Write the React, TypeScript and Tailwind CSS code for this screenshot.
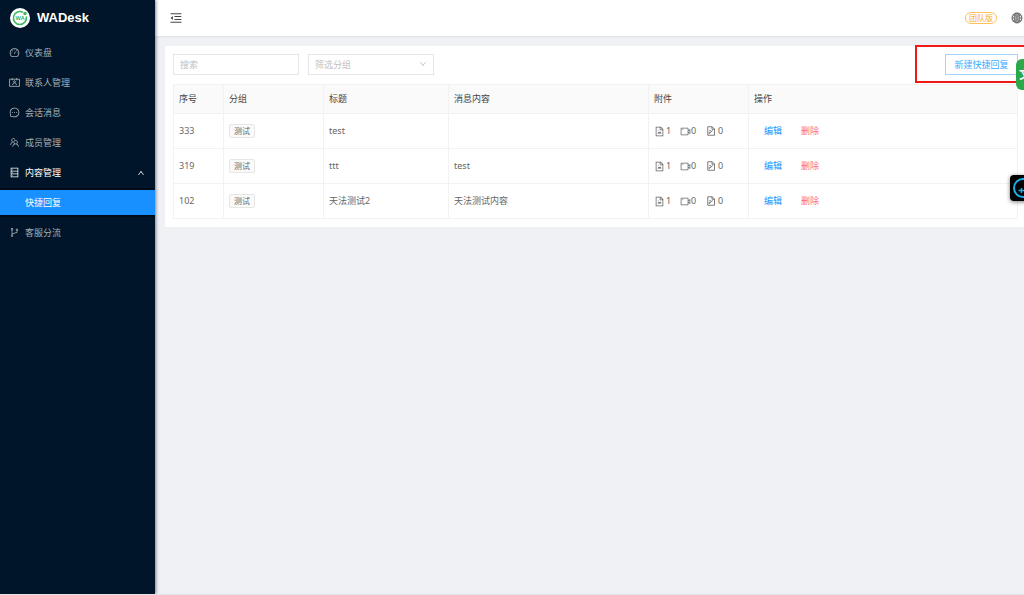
import React from 'react';
import {
  AiOutlineBranches,
  AiOutlineDashboard,
  AiOutlineDatabase,
  AiOutlineDown,
  AiOutlineFileImage,
  AiOutlineGlobal,
  AiOutlineMenuFold,
  AiOutlineMessage,
  AiOutlineTeam,
  AiOutlineUp,
  AiOutlineVideoCamera,
} from 'react-icons/ai';

const rows = [
  { id: 333, group: '测试', title: 'test', content: '' },
  { id: 319, group: '测试', title: 'ttt', content: 'test' },
  { id: 102, group: '测试', title: '天法测试2', content: '天法测试内容' },
];

const ContactsIcon = ({ className }: { className?: string }) => (
  <svg className={className} viewBox="0 0 20 20" fill="none" stroke="currentColor" strokeWidth="1.6">
    <path d="M1 4h18v13H1zM6 2v4M14 2v4" />
    <circle cx="10" cy="8.500" r="1.700" />
    <path d="M6.500 14.500c.3-2.500 1.700-4 3.500-4s3.200 1.500 3.500 4" />
  </svg>
);

const FileEditIcon = ({ className }: { className?: string }) => (
  <svg className={className} viewBox="0 0 20 20" fill="none" stroke="currentColor" strokeWidth="1.7">
    <path d="M3.500 1.500h9l4.500 4.500v12.500h-13.500zM12 1.500v5h5" />
    <path d="M6.500 15l7-6M6.500 9.500h4M6.500 12v3.500" />
  </svg>
);

const topMenu = [
  { label: '仪表盘', icon: AiOutlineDashboard },
  { label: '联系人管理', icon: ContactsIcon },
  { label: '会话消息', icon: AiOutlineMessage },
  { label: '成员管理', icon: AiOutlineTeam },
];

const Logo = () => (
  <svg className="h-5 w-5" viewBox="0 0 40 40">
    <circle cx="20" cy="20" r="20" fill="#fff" />
    <path d="M26 8.5A13 13 0 1 0 32.5 17" fill="none" stroke="#3fb55d" strokeWidth="3" />
    <circle cx="30" cy="11" r="3.5" fill="#3fb55d" />
    <text x="20" y="24" textAnchor="middle" fontSize="11" fontWeight="700" fill="#3fb55d">WA</text>
  </svg>
);

const Sidebar = () => (
  <aside className="relative z-10 flex w-[155px] shrink-0 flex-col bg-[#001529] text-[#a6adb4] shadow-[1px_0_3px_rgba(0,21,41,0.5)]">
    <div className="flex h-9 items-center gap-[7px] pl-2.5">
      <Logo />
      <h1 className="font-['Liberation_Sans',sans-serif] text-[13px] font-bold text-white">WADesk</h1>
    </div>
    <nav className="pt-1">
      {topMenu.map(({ label, icon: Icon }) => (
        <a key={label} href="#" className="mb-[5px] flex h-[25px] items-center gap-[5px] pl-[9px]">
          <Icon className="h-[11px] w-[11px]" />
          {label}
        </a>
      ))}
      <button className="flex h-[25px] w-full items-center gap-[5px] pr-2.5 pl-[9px] text-white">
        <AiOutlineDatabase className="h-[11px] w-[11px]" />
        内容管理
        <AiOutlineUp className="ml-auto h-2 w-2" />
      </button>
      <div className="my-[3px] bg-[#000c17] py-0.5">
        <a href="#" className="flex h-[25px] items-center bg-[#1890ff] pl-[25px] text-white">
          快捷回复
        </a>
      </div>
      <a href="#" className="flex h-[25px] items-center gap-[5px] pl-[9px]">
        <AiOutlineBranches className="h-[11px] w-[11px]" />
        客服分流
      </a>
    </nav>
  </aside>
);

const Header = () => (
  <header className="flex h-9 shrink-0 items-center justify-between bg-white pr-px pl-3.5 shadow-[0_1px_2px_rgba(0,21,41,0.08)]">
    <button aria-label="收起菜单">
      <AiOutlineMenuFold className="h-3.5 w-3.5 text-[#444]" />
    </button>
    <div className="flex items-center gap-3.5">
      <span className="flex h-3 items-center rounded-full border border-[#ffc25c] px-[3px] text-[8px] text-[#faad14]">
        团队版
      </span>
      <AiOutlineGlobal className="h-3 w-3 stroke-[30px] text-[#666]" />
    </div>
  </header>
);

const Attachments = () => (
  <div className="flex items-center">
    <span className="flex w-[26px] items-center gap-px">
      <AiOutlineFileImage className="h-[11px] w-[11px]" />1
    </span>
    <span className="flex w-[26px] items-center">
      <AiOutlineVideoCamera className="h-[11px] w-[11px]" />0
    </span>
    <span className="flex items-center gap-0.5">
      <FileEditIcon className="h-2.5 w-2.5" />0
    </span>
  </div>
);

const ReplyTable = () => {
  const cell = 'border border-[#f2f2f2] px-[5px] text-left';

  return (
    <table className="w-full table-fixed border-collapse">
      <colgroup>
        <col className="w-[50px]" />
        <col className="w-[100px]" />
        <col className="w-[125px]" />
        <col className="w-[200px]" />
        <col className="w-[100px]" />
        <col />
      </colgroup>
      <thead>
        <tr className="h-[29px] bg-[#fafafa] text-[#444]">
          {['序号', '分组', '标题', '消息内容', '附件', '操作'].map((name) => (
            <th key={name} className={`${cell} font-normal`}>{name}</th>
          ))}
        </tr>
      </thead>
      <tbody>
        {rows.map((row) => (
          <tr key={row.id} className="h-[35px]">
            <td className={cell}>{row.id}</td>
            <td className={cell}>
              <span className="inline-flex h-3.5 items-center rounded-xs border border-[#e6e6e6] bg-[#fafafa] px-1 align-middle text-[8px]">
                {row.group}
              </span>
            </td>
            <td className={cell}>{row.title}</td>
            <td className={cell}>{row.content}</td>
            <td className={cell}>
              <Attachments />
            </td>
            <td className={cell}>
              <div className="flex gap-[19px] pl-2.5">
                <button className="text-[#1890ff]">编辑</button>
                <button className="text-[#ff6b6e]">删除</button>
              </div>
            </td>
          </tr>
        ))}
      </tbody>
    </table>
  );
};

const App = () => {
  return (
    <div className="relative flex min-h-screen overflow-hidden border-b border-[#e4e4e6] bg-[#eff1f5] font-['Noto_Sans','Noto_Sans_CJK_SC',sans-serif] text-[9px] leading-3 text-[#666]">
      <Sidebar />
      <div className="flex min-w-0 flex-1 flex-col">
        <Header />
        <main className="mt-2.5 ml-2.5 bg-white pt-2 pr-1.5 pb-2 pl-2">
          <div className="mb-[9px] flex items-center">
            <input
              type="text"
              aria-label="搜索"
              placeholder="搜索"
              className="h-[21px] w-[126px] border border-[#e6e6e6] px-1.5 placeholder:text-[#bfbfbf]"
            />
            <div className="relative ml-[9px]">
              <select
                aria-label="筛选分组"
                className="block h-[21px] w-[126px] appearance-none border border-[#e6e6e6] bg-white px-1.5 text-[#bfbfbf]"
              >
                <option>筛选分组</option>
              </select>
              <AiOutlineDown className="pointer-events-none absolute top-1.5 right-[7px] h-2 w-2 text-[#bfbfbf]" />
            </div>
            <button className="ml-auto h-[21px] w-[73px] border border-[#a3d3ff] text-[#40a9ff]">
              新建快捷回复
            </button>
          </div>
          <ReplyTable />
        </main>
      </div>

      {/* highlight frame around the create button */}
      <div className="pointer-events-none absolute top-[45px] -right-1 z-20 h-[38px] w-[113px] border-2 border-[#f01818]" />
      {/* floating widgets docked to the right edge */}
      <button
        aria-label="翻译"
        className="absolute top-[59px] -right-2.5 z-30 h-[31px] w-[18px] overflow-hidden rounded-md bg-[#2aa84a] pl-[3px] text-left text-xs font-bold text-white"
      >
        文
      </button>
      <button
        aria-label="助手"
        className="absolute top-[175px] -right-3 z-30 flex h-[26px] w-[26px] items-center justify-center rounded-sm bg-black shadow-[0_1px_4px_rgba(0,0,0,0.5)]"
      >
        <svg className="h-5 w-5 shrink-0" viewBox="0 0 20 20" fill="none" stroke="#19b0e6">
          <circle cx="10" cy="10" r="9" strokeWidth="2" />
          <path d="M5.500 12.500h6M8.500 10v5" strokeWidth="1.500" />
        </svg>
      </button>
    </div>
  );
};

export default App;
